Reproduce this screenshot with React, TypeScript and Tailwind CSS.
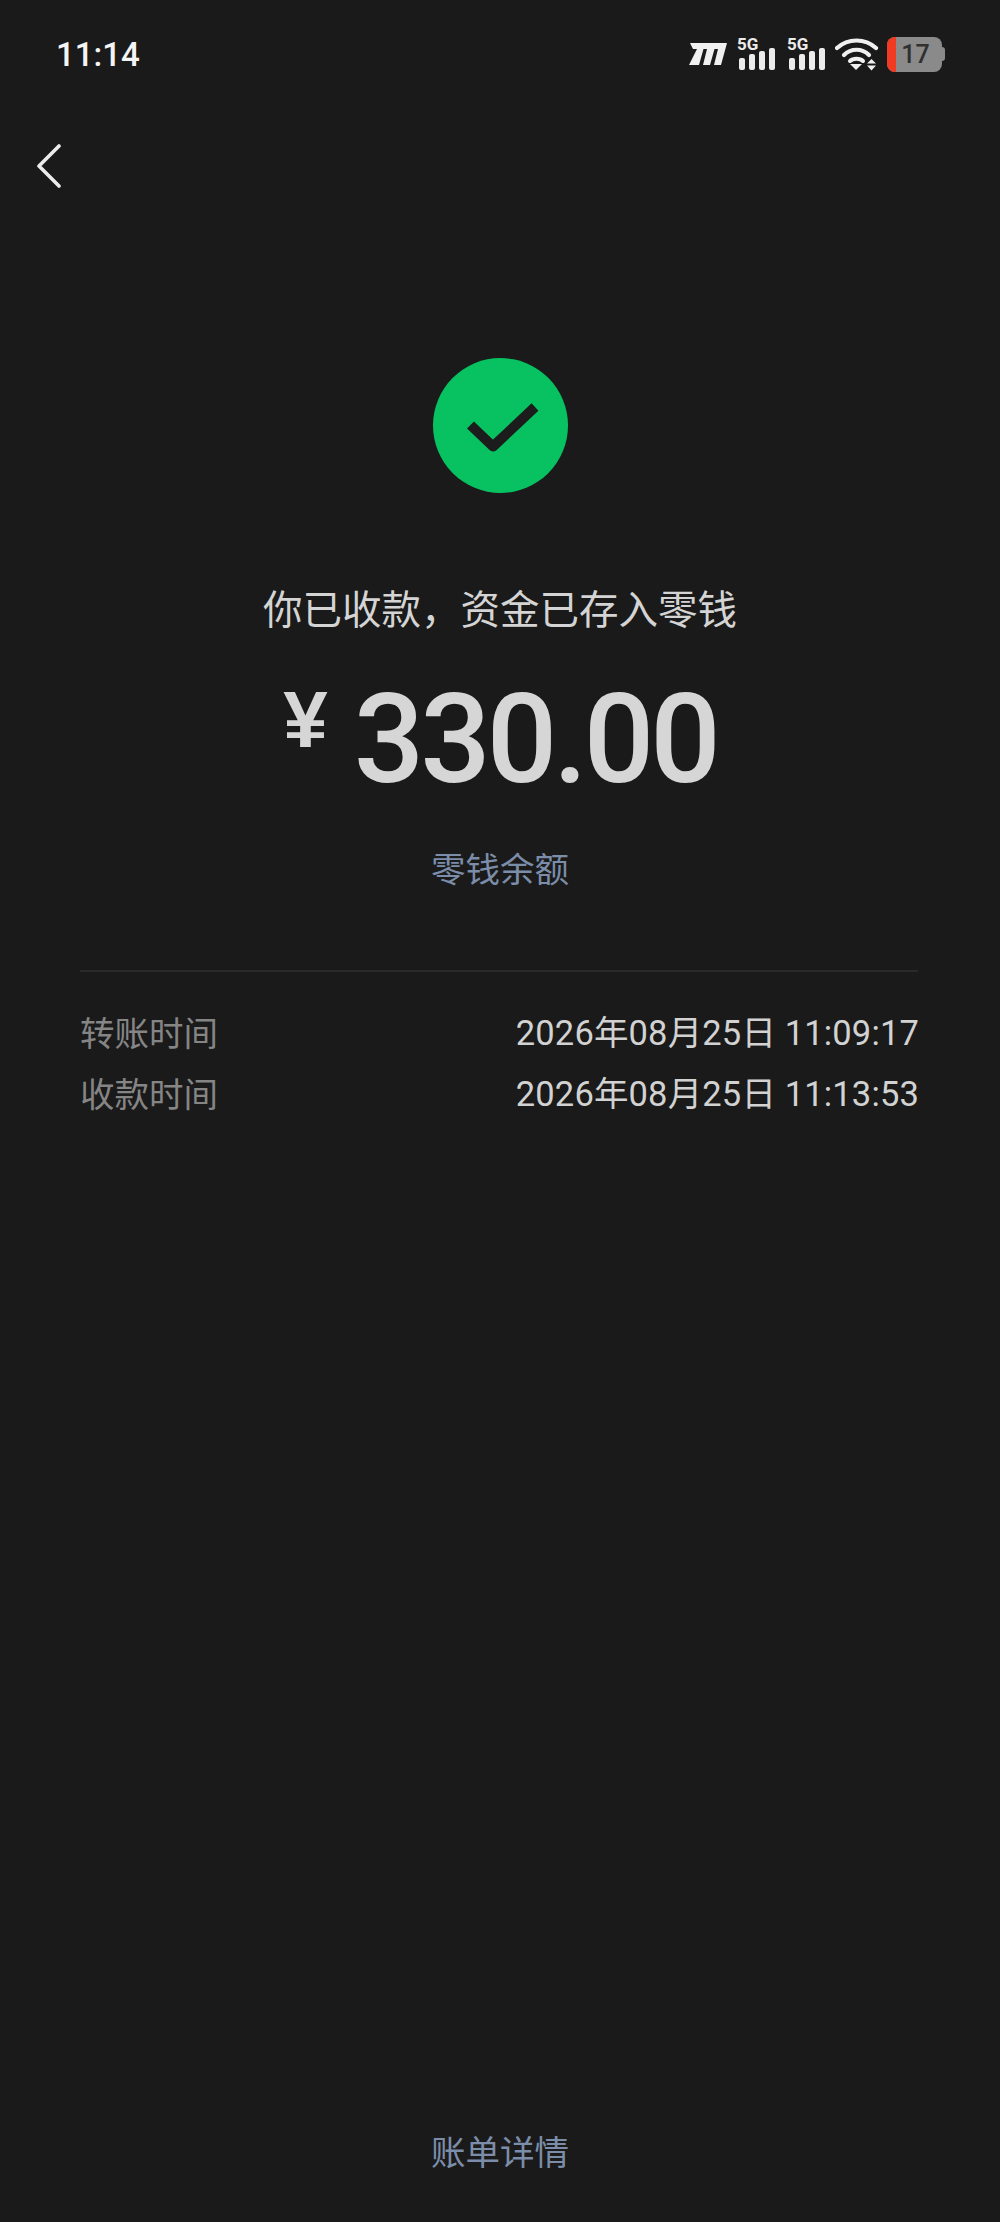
import React from "react";

const CJK = "font-['Noto_Sans_CJK_SC','Noto_Sans',sans-serif]";

// Signal strength bars with the network label above them
function Signal() {
  return (
    <div className="relative w-[40px] h-[36px]">
      <span className="absolute left-[1px] top-[-1px] text-[17px] leading-[18px] font-bold text-[#ececec] font-['Roboto',sans-serif]">5G</span>
      <svg className="absolute left-0 top-0" width="40" height="36" viewBox="0 0 40 36" fill="#ececec">
        <rect x="3" y="22" width="6" height="12" rx="2" />
        <rect x="13" y="18" width="6" height="16" rx="2" />
        <rect x="23" y="15" width="6" height="19" rx="2" />
        <rect x="33" y="12" width="6" height="22" rx="2" />
      </svg>
    </div>
  );
}

function StatusIcons() {
  return (
    <div className="flex items-center">
      <svg width="40" height="24" viewBox="0 0 40 24" fill="#f0f0f0">
        <path d="M2 1H39L33 23H26L30 7H26.5L22 23H15L19 7H15.5L11 23H1L9 7H5Z" />
      </svg>
      <div className="ml-[8px]"><Signal /></div>
      <div className="ml-[10px]"><Signal /></div>
      <svg className="ml-[9px]" width="44" height="34" viewBox="0 0 44 34" fill="none">
        <path d="M2 11C13 1 30 1 41 11" stroke="#f0f0f0" strokeWidth="4.2" strokeLinecap="round" />
        <path d="M9 18C16 11 27 11 34 18" stroke="#f0f0f0" strokeWidth="4.2" strokeLinecap="round" />
        <path d="M15 24C18 21 25 21 28 24" stroke="#f0f0f0" strokeWidth="4" strokeLinecap="round" />
        <path d="M15 27H27L21 33Z" fill="#f0f0f0" />
        <path d="M32 26.5L36.5 22L41 26.5ZM32 28.5H41L36.5 33.5Z" fill="#f0f0f0" />
      </svg>
      <div className="ml-[8px] flex items-center">
        <div className="relative w-[55px] h-[35px] rounded-[8px] bg-[#8a8a8a] overflow-hidden flex items-center justify-center">
          <div className="absolute left-0 top-0 bottom-0 w-[9px] bg-[#f03a22]" />
          <span className="relative text-[25px] leading-none font-medium text-[#303030] font-['Roboto',sans-serif] pl-[2px]">17</span>
        </div>
        <div className="w-[3px] h-[14px] rounded-r-[3px] bg-[#8a8a8a]" />
      </div>
    </div>
  );
}

function TimeRow({ label, value }: { label: string; value: string }) {
  return (
    <div className={`flex items-center justify-between h-[61px] text-[34.5px] leading-[61px] ${CJK}`}>
      <span className="text-[#858585] pb-[1px]">{label}</span>
      <span className="text-[#d2d2d2] tracking-[0.15px] pt-[3px] font-['Roboto','Noto_Sans_CJK_SC',sans-serif]">{value}</span>
    </div>
  );
}

export default function App() {
  return (
    <div className={`w-[1000px] h-[2222px] bg-[#1a1a1a] flex flex-col ${CJK}`}>
      <div className="flex items-center justify-between h-[108px] pl-[56px] pr-[55px]">
        <span className="text-[33px] font-medium text-[#f4f4f4] pt-[2px] font-['Roboto',sans-serif]">11:14</span>
        <StatusIcons />
      </div>

      <div className="pl-[36px] pt-[36px] h-[250px]">
        <svg width="28" height="44" viewBox="0 0 28 44" fill="none">
          <path d="M23 2L3 22L23 42" stroke="#ececec" strokeWidth="3.6" strokeLinecap="round" strokeLinejoin="round" />
        </svg>
      </div>

      <div className="flex flex-col items-center">
        <div className="w-[135px] h-[135px] rounded-full bg-[#08c160] flex items-center justify-center">
          <svg width="135" height="135" viewBox="0 0 135 135" fill="none">
            <path d="M37.5 67L60 88.5L102 49" stroke="#1c1c1c" strokeWidth="10" strokeLinejoin="round" />
          </svg>
        </div>
        <div className="mt-[84px] text-[39.5px] leading-[60px] text-[#d4d4d4]">你已收款，资金已存入零钱</div>
        <div className="mt-[33px] flex items-start h-[140px] text-[#d6d6d6] font-['Roboto',sans-serif]">
          <span className="text-[80px] leading-[100px] font-bold mr-[26px] font-['Liberation_Sans',sans-serif]">¥</span>
          <span className="text-[124px] leading-[140px] font-medium tracking-[-4px]">330.00</span>
        </div>
        <div className="mt-[32px] text-[34.5px] leading-[50px] text-[#7b8da8]">零钱余额</div>
      </div>

      <div className="ml-[80px] mr-[82px] mt-[78px] h-[2px] bg-[#2a2a2a]" />

      <div className="ml-[80px] mr-[81px] mt-[29px]">
        <TimeRow label="转账时间" value="2026年08月25日 11:09:17" />
        <TimeRow label="收款时间" value="2026年08月25日 11:13:53" />
      </div>

      <div className="mt-auto mb-[47px] text-center text-[34.5px] leading-[50px] text-[#7b8da8]">账单详情</div>
    </div>
  );
}
